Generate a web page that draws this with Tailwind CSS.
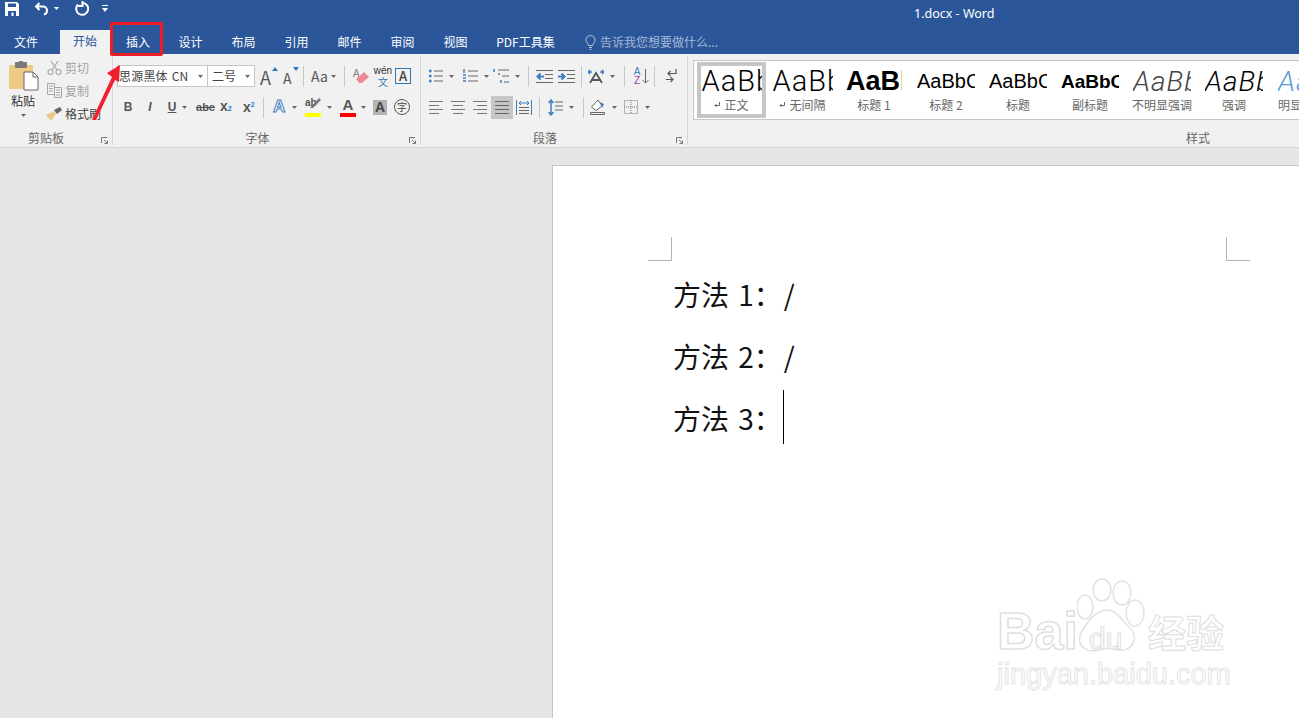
<!DOCTYPE html>
<html lang="zh-CN">
<head>
<meta charset="UTF-8">
<title>1.docx - Word</title>
<script src="https://cdn.jsdelivr.net/npm/@tailwindcss/browser@4"></script>
</head>
<body class="relative w-[1299px] h-[718px] overflow-hidden bg-[#e6e6e6] [font-family:'Noto_Sans_CJK_SC','Liberation_Sans',sans-serif]">

<!-- title bar -->
<div class="h-[30px] bg-[#2b579a] relative flex items-start">
  <div class="flex items-center h-[16px] pl-[5px] pt-[1px]">
    <svg class="w-[14px] h-[14px]" viewBox="0 0 14 14"><path d="M0 0h12l2 2v12H0z" fill="#fff"/><path d="M3 1.500h8v3.500H3zM3 9h8v5H8.500v-3.500h-2V14H3z" fill="#2b579a"/></svg>
    <svg class="w-[15px] h-[14px] ml-[15px]" viewBox="0 0 15 14" fill="none" stroke="#fff" stroke-width="2"><path d="M5.500 1 2 4.500 5.500 8M2 4.500h7a4 4 0 0 1 4 4 4 4 0 0 1-3 4"/></svg>
    <svg class="w-[5px] h-[3px] ml-[5px]" viewBox="0 0 5 3" fill="#fff"><path d="M0 0h5L2.500 3z"/></svg>
    <svg class="w-[15px] h-[15px] ml-[15px]" viewBox="0 0 15 15" fill="none" stroke="#fff" stroke-width="2"><path d="M4 3.500a6 6 0 1 0 4-1.700M8.500 0v5H4"/></svg>
    <svg class="w-[6px] h-[7px] ml-[13px]" viewBox="0 0 6 7" fill="#fff"><path d="M0 0h6v1H0zM0 3h6L3 7z"/></svg>
  </div>
  <span class="absolute left-[914px] top-[5px] text-[12.500px] leading-[18px] text-white [font-family:'Noto_Sans','Open_Sans',sans-serif]">1.docx - Word</span>
</div>

<!-- tabs -->
<div class="h-[24px] bg-[#2b579a] flex items-center text-[12px] text-white">
  <span class="w-[52px] text-center">文件</span>
  <span class="ml-[8px] w-[50px] h-[24px] leading-[22px] bg-[#f1f1f1] text-[#2b579a] text-center">开始</span>
  <span class="w-[52px] ml-[2px] text-center">插入</span>
  <span class="w-[53px] text-center">设计</span>
  <span class="w-[53px] text-center">布局</span>
  <span class="w-[53px] text-center">引用</span>
  <span class="w-[53px] text-center">邮件</span>
  <span class="w-[53px] text-center">审阅</span>
  <span class="w-[53px] text-center">视图</span>
  <span class="w-[87px] text-center">PDF工具集</span>
  <svg class="w-[11px] h-[15px] ml-[16px]" viewBox="0 0 11 15" fill="none" stroke="#b4c6e0" stroke-width="1"><path d="M3.500 10.500C3 8 1 7.500 1 5a4.500 4.500 0 0 1 9 0c0 2.500-2 3-2.500 5.500zM4 12.500h3M4.500 14.500h2"/></svg>
  <span class="ml-[4px] text-[#a5b8d6]">告诉我您想要做什么...</span>
</div>

<!-- ribbon -->
<div class="h-[94px] bg-[#f1f1f1] border-b border-[#d4d4d4] flex">

  <!-- clipboard -->
  <div class="w-[113px] shrink-0 relative border-r border-[#d4d4d4] h-[89px] mt-[2px]">
    <div class="flex h-[72px]">
      <div class="w-[47px] flex flex-col items-center shrink-0">
        <svg class="w-[30px] h-[30px] mt-[5px] ml-[1px]" viewBox="0 0 30 30">
          <rect x="0" y="4" width="24" height="24" rx="1" fill="#eecb85"/>
          <rect x="6" y="1" width="12" height="6" rx="1" fill="#7a7a7a"/>
          <rect x="10" y="0" width="4" height="3" fill="#7a7a7a"/>
          <path d="M15 11h9l5 5v13H15z" fill="#fff" stroke="#666"/>
          <path d="M24 11v5h5" fill="none" stroke="#666"/>
        </svg>
        <span class="text-[12px] leading-[16px] mt-[2px] text-[#333] -ml-[1px]">粘贴</span>
        <svg class="w-[5px] h-[3px] mt-[5px]" viewBox="0 0 5 3" fill="#666"><path d="M0 0h5L2.500 3z"/></svg>
      </div>
      <div class="flex flex-col text-[12px]">
        <div class="flex items-center h-[23px] text-[#a3a3a3]">
          <svg class="w-[15px] h-[15px]" viewBox="0 0 15 15" fill="none" stroke="#a8a8a8" stroke-width="1.200"><circle cx="3.500" cy="12" r="2.500"/><circle cx="11.500" cy="12" r="2.500"/><path d="M5 10 11 1M10 10 4 1"/></svg>
          <span class="ml-[3px]">剪切</span>
        </div>
        <div class="flex items-center h-[23px] text-[#a3a3a3]">
          <svg class="w-[15px] h-[15px]" viewBox="0 0 15 15" fill="none" stroke="#a8a8a8"><path d="M.5.5h7v11h-7zM7.500 4.500h7v10h-7zM2 3h4M2 5.500h4M2 8h4M9 7h4M9 9.500h4M9 12h4"/></svg>
          <span class="ml-[3px]">复制</span>
        </div>
        <div class="flex items-center h-[23px] text-[#444]">
          <svg class="w-[16px] h-[14px] -ml-[1px]" viewBox="0 0 16 14"><path d="M8 4 0 8l5 6 5-7z" fill="#eac88a"/><path d="M8 3l3 4 5-4-2-3z" fill="#666"/></svg>
          <span class="ml-[3px]">格式刷</span>
        </div>
      </div>
    </div>
    <div class="text-center text-[12px] leading-[16px] text-[#666] pr-[20px] mt-[2px]">剪贴板</div>
    <svg class="absolute left-[101px] top-[81px] w-[7px] h-[7px]" viewBox="0 0 7 7" fill="none" stroke="#777"><path d="M.5 6V.5H6M3 3l3 3M3.500 6.500h3v-3"/></svg>
  </div>

  <!-- font -->
  <div class="w-[308px] shrink-0 relative border-r border-[#d4d4d4] h-[89px] mt-[2px] pl-[4px] pt-[9px]">
    <div class="flex items-center h-[22px] text-[#444]">
      <div class="w-[91px] h-[22px] bg-white border border-[#c6c6c6] flex items-center text-[12px] pl-[1px] whitespace-nowrap"><span class="flex-1 [word-spacing:1px] tracking-[0.2px]">思源黑体 CN</span><svg class="w-[5px] h-[3px] mr-[4px]" viewBox="0 0 5 3" fill="#666"><path d="M0 0h5L2.500 3z"/></svg></div>
      <div class="w-[47px] h-[22px] bg-white border border-l-0 border-[#c6c6c6] flex items-center text-[12px] pl-[4px]"><span class="flex-1">二号</span><svg class="w-[5px] h-[3px] mr-[4px]" viewBox="0 0 5 3" fill="#666"><path d="M0 0h5L2.500 3z"/></svg></div>
      <div class="ml-[5px] w-[17px] h-[18px] relative text-[18px] leading-[21px] text-[#555]">A<svg class="absolute -right-[1px] top-0 w-[6px] h-[4px]" viewBox="0 0 6 4" fill="#2e75b6"><path d="M0 4h6L3 0z"/></svg></div>
      <div class="ml-[6px] w-[16px] h-[18px] relative text-[14px] leading-[22px] text-[#555]">A<svg class="absolute right-0 top-0 w-[6px] h-[4px]" viewBox="0 0 6 4" fill="#2e75b6"><path d="M0 0h6L3 4z"/></svg></div>
      <div class="ml-[4px] w-px h-[21px] bg-[#c6c6c6]"></div>
      <div class="ml-[7px] text-[14px] leading-[20px] text-[#555] w-[15px]">Aa</div>
      <svg class="w-[5px] h-[3px] ml-[5px]" viewBox="0 0 5 3" fill="#666"><path d="M0 0h5L2.500 3z"/></svg>
      <div class="ml-[8px] w-px h-[21px] bg-[#c6c6c6]"></div>
      <div class="ml-[8px] w-[17px] h-[20px] relative text-[11px] leading-[13px] text-[#777]">A<svg class="absolute left-[2px] top-[5px] w-[15px] h-[13px]" viewBox="0 0 15 13"><path d="M1 8 9 1l5 5-7 6H4z" fill="#ee8a95"/></svg></div>
      <div class="ml-[5px] w-[16px] flex flex-col items-center text-[#333]"><span class="text-[10px] leading-[10px] [font-family:'Liberation_Sans',sans-serif]">wén</span><span class="text-[10px] leading-[11px] text-[#2e75b6]">文</span></div>
      <div class="ml-[4px] w-[16px] h-[16px] border border-[#2e75b6] text-[13px] leading-[14px] text-center font-medium text-[#444]">A</div>
    </div>
    <div class="flex items-center h-[22px] mt-[9px] text-[#555] [font-family:'Liberation_Sans',sans-serif]">
      <b class="ml-[6px] w-[10px] text-[12px] text-center">B</b>
      <i class="ml-[12px] w-[10px] text-[12px] text-center font-semibold">I</i>
      <u class="ml-[12px] w-[10px] text-[12px] text-center font-bold">U</u>
      <svg class="w-[5px] h-[3px] ml-[5px]" viewBox="0 0 5 3" fill="#666"><path d="M0 0h5L2.500 3z"/></svg>
      <s class="ml-[9px] text-[11px] w-[19px] text-center font-semibold">abc</s>
      <b class="ml-[5px] w-[14px] text-[14px] leading-[16px]">x<span class="text-[7px] text-[#2e75b6]">2</span></b>
      <b class="ml-[9px] w-[14px] text-[14px] leading-[16px] relative">x<span class="absolute top-[-2px] text-[7px] text-[#2e75b6]">2</span></b>
      <div class="ml-[6px] w-px h-[21px] bg-[#c6c6c6]"></div>
      <div class="ml-[9px] w-[14px] text-[17px] leading-[20px] font-bold text-white [-webkit-text-stroke:1px_#3f7fc1]">A</div>
      <svg class="w-[5px] h-[3px] ml-[5px]" viewBox="0 0 5 3" fill="#666"><path d="M0 0h5L2.500 3z"/></svg>
      <div class="ml-[8px] w-[16px] h-[20px] relative text-[10px] leading-[12px] font-bold"><span>ab</span><svg class="absolute left-[4px] top-0 w-[12px] h-[12px]" viewBox="0 0 12 12"><path d="M1 11 10 1l2 2-8 8z" fill="#777"/></svg><div class="absolute left-0 bottom-0 w-[16px] h-[4px] bg-[#ffff00]"></div></div>
      <svg class="w-[5px] h-[3px] ml-[6px]" viewBox="0 0 5 3" fill="#666"><path d="M0 0h5L2.500 3z"/></svg>
      <div class="ml-[8px] w-[16px] h-[20px] relative text-[15px] leading-[15px] text-center font-bold text-[#555]">A<div class="absolute left-0 bottom-0 w-[16px] h-[4px] bg-[#ff0000]"></div></div>
      <svg class="w-[5px] h-[3px] ml-[5px]" viewBox="0 0 5 3" fill="#666"><path d="M0 0h5L2.500 3z"/></svg>
      <div class="ml-[7px] w-[14px] h-[15px] bg-[#b4b4b4] text-[14px] leading-[15px] text-center font-bold text-[#444]">A</div>
      <div class="ml-[7px] w-[16px] h-[16px] rounded-full border border-[#555] text-[10px] leading-[14px] text-center text-[#444] [font-family:'Noto_Sans_CJK_SC',sans-serif]">字</div>
    </div>
    <div class="absolute left-0 right-[18px] top-[74px] text-center text-[12px] leading-[16px] text-[#666]">字体</div>
    <svg class="absolute right-[4px] top-[81px] w-[7px] h-[7px]" viewBox="0 0 7 7" fill="none" stroke="#777"><path d="M.5 6V.5H6M3 3l3 3M3.500 6.500h3v-3"/></svg>
  </div>

  <!-- paragraph -->
  <div class="w-[267px] shrink-0 relative border-r border-[#d4d4d4] h-[89px] mt-[2px] pl-[8px] pt-[9px]">
    <div class="flex items-center h-[22px]">
      <svg class="w-[14px] h-[14px]" viewBox="0 0 14 14" fill="none" stroke="#666"><path d="M5 2h9M5 7h9M5 12h9"/><path stroke="#3f7fc1" stroke-width="2.500" d="M0 2h2.500M0 7h2.500M0 12h2.500"/></svg>
      <svg class="w-[5px] h-[3px] ml-[6px]" viewBox="0 0 5 3" fill="#666"><path d="M0 0h5L2.500 3z"/></svg>
      <svg class="w-[15px] h-[14px] ml-[9px]" viewBox="0 0 15 14" fill="none" stroke="#666"><path d="M5 2h10M5 7h10M5 12h10"/><path stroke="#3f7fc1" stroke-width="1.500" d="M1 0v4M0 6h3M0 9h3M0 12h3"/></svg>
      <svg class="w-[5px] h-[3px] ml-[6px]" viewBox="0 0 5 3" fill="#666"><path d="M0 0h5L2.500 3z"/></svg>
      <svg class="w-[16px] h-[14px] ml-[4px]" viewBox="0 0 16 14" fill="none" stroke="#666"><path d="M5 1h11M9 7h7M11 13h5"/><path stroke="#3f7fc1" stroke-width="1.500" d="M1 0v3M5 5h2M8 11v3"/></svg>
      <svg class="w-[5px] h-[3px] ml-[6px]" viewBox="0 0 5 3" fill="#666"><path d="M0 0h5L2.500 3z"/></svg>
      <div class="ml-[8px] w-px h-[21px] bg-[#c6c6c6]"></div>
      <svg class="w-[17px] h-[13px] ml-[7px]" viewBox="0 0 17 13" fill="none" stroke="#666"><path d="M0 .5h17M9 4.500h8M9 8.500h8M0 12.500h17"/><path stroke="#3f7fc1" stroke-width="2" d="M8 6.500H2M4.500 3.500l-3 3 3 3"/></svg>
      <svg class="w-[17px] h-[13px] ml-[5px]" viewBox="0 0 17 13" fill="none" stroke="#666"><path d="M0 .5h17M9 4.500h8M9 8.500h8M0 12.500h17"/><path stroke="#3f7fc1" stroke-width="2" d="M0 6.500h6M3.500 3.500l3 3-3 3"/></svg>
      <div class="ml-[6px] w-px h-[21px] bg-[#c6c6c6]"></div>
      <svg class="w-[16px] h-[15px] ml-[6px]" viewBox="0 0 16 15" fill="none"><path d="M2 14 8 4l6 10M4 11h8" stroke="#555" stroke-width="1.800"/><path stroke="#3f7fc1" stroke-width="1.500" d="M0 3h4M2 1 0 3l2 2M12 3h4M14 1l2 2-2 2"/></svg>
      <svg class="w-[5px] h-[3px] ml-[6px]" viewBox="0 0 5 3" fill="#666"><path d="M0 0h5L2.500 3z"/></svg>
      <div class="ml-[9px] w-px h-[21px] bg-[#c6c6c6]"></div>
      <div class="ml-[7px] w-[10px] flex flex-col items-center text-[10px] leading-[9px] font-medium [font-family:'Liberation_Sans',sans-serif]"><span class="text-[#3f7fc1]">A</span><span class="text-[#8e44ad]">Z</span></div>
      <svg class="w-[7px] h-[15px]" viewBox="0 0 7 15" fill="none" stroke="#666"><path d="M3.500 0v14M.5 11l3 3 3-3"/></svg>
      <div class="ml-[5px] w-px h-[21px] bg-[#c6c6c6]"></div>
      <svg class="w-[12px] h-[14px] ml-[10px]" viewBox="0 0 12 14" fill="none" stroke="#555" stroke-width="1.200"><path d="M11 0v4.500H3M5.500 2 3 4.500 5.500 7M1 10.500h7M5.500 8 8 10.500 5.500 13"/></svg>
    </div>
    <div class="flex items-center h-[22px] mt-[9px]">
      <svg class="w-[14px] h-[13px]" viewBox="0 0 14 13" fill="none" stroke="#777"><path d="M0 .5h14M0 4.500h10M0 8.500h14M0 12.500h10"/></svg>
      <svg class="w-[14px] h-[13px] ml-[8px]" viewBox="0 0 14 13" fill="none" stroke="#777"><path d="M0 .5h14M2 4.500h10M0 8.500h14M2 12.500h10"/></svg>
      <svg class="w-[14px] h-[13px] ml-[8px]" viewBox="0 0 14 13" fill="none" stroke="#777"><path d="M0 .5h14M4 4.500h10M0 8.500h14M4 12.500h10"/></svg>
      <div class="ml-[4px] w-[22px] h-[23px] bg-[#c6c6c6] flex items-center justify-center"><svg class="w-[14px] h-[13px]" viewBox="0 0 14 13" fill="none" stroke="#666"><path d="M0 .5h14M0 4.500h14M0 8.500h14M0 12.500h14"/></svg></div>
      <svg class="w-[16px] h-[16px] ml-[3px]" viewBox="0 0 16 16" fill="none" stroke="#666"><path d="M3 8.500h10M3 11.500h10M3 14.500h10"/><path stroke="#3f7fc1" d="M.5 1v15M15.500 1v15M3 4h10M5 2 3 4l2 2M11 2l2 2-2 2"/></svg>
      <div class="ml-[7px] w-px h-[21px] bg-[#c6c6c6]"></div>
      <svg class="w-[15px] h-[17px] ml-[8px]" viewBox="0 0 15 17" fill="none" stroke="#666"><path d="M7 3h8M7 7h8M7 11h8"/><path stroke="#3f7fc1" stroke-width="1.500" d="M3 1v15M.5 4 3 1l2.500 3M.5 13 3 16l2.500-3"/></svg>
      <svg class="w-[5px] h-[3px] ml-[6px]" viewBox="0 0 5 3" fill="#666"><path d="M0 0h5L2.500 3z"/></svg>
      <div class="ml-[9px] w-px h-[21px] bg-[#c6c6c6]"></div>
      <svg class="w-[16px] h-[16px] ml-[6px]" viewBox="0 0 16 16" fill="none" stroke="#666"><path d="M8 1 1.500 8 6 11.500 12 7z" fill="#fff"/><path d="M10 3l4 2-2 4z" fill="#3f7fc1" stroke="none"/><path d="M.5 13.500h14v2H.5z"/></svg>
      <svg class="w-[5px] h-[3px] ml-[6px]" viewBox="0 0 5 3" fill="#666"><path d="M0 0h5L2.500 3z"/></svg>
      <svg class="w-[14px] h-[14px] ml-[7px]" viewBox="0 0 14 14" fill="none" stroke="#777" stroke-dasharray="1 1"><path d="M.5.5h13v13H.5zM7 0v14M0 7h14"/></svg>
      <svg class="w-[5px] h-[3px] ml-[7px]" viewBox="0 0 5 3" fill="#666"><path d="M0 0h5L2.500 3z"/></svg>
    </div>
    <div class="absolute left-0 right-[18px] top-[74px] text-center text-[12px] leading-[16px] text-[#666]">段落</div>
    <svg class="absolute right-[4px] top-[81px] w-[7px] h-[7px]" viewBox="0 0 7 7" fill="none" stroke="#777"><path d="M.5 6V.5H6M3 3l3 3M3.500 6.500h3v-3"/></svg>
  </div>

  <!-- styles -->
  <div class="flex-1 min-w-0 relative pl-[5px] pt-[6px]">
    <div class="h-[60px] bg-white border border-r-0 border-[#c6c6c6] flex pl-[3px] pt-[1px] overflow-hidden text-[12px] text-[#666]">
      <div class="w-[69px] h-[56px] shrink-0 border-[4px] border-[#c6c6c6] flex flex-col items-center">
        <div class="w-[60px] overflow-hidden whitespace-nowrap text-[29px] leading-[31px] font-light tracking-[1px] text-black [font-family:'Roboto',sans-serif]">AaBbCcDdEe</div>
        <div class="leading-[16px] flex items-center"><svg class="w-[6px] h-[6px] mr-[4px]" viewBox="0 0 6 6" fill="none" stroke="#666"><path d="M5.500 0v3.500H1M2.500 2 1 3.500 2.500 5"/></svg>正文</div>
      </div>
      <div class="w-[72px] h-[56px] shrink-0 flex flex-col items-center pt-[4px] pl-[1px]">
        <div class="w-[60px] overflow-hidden whitespace-nowrap text-[29px] leading-[31px] font-light tracking-[1px] text-black [font-family:'Roboto',sans-serif]">AaBbCcDdEe</div>
        <div class="leading-[16px] flex items-center"><svg class="w-[6px] h-[6px] mr-[4px]" viewBox="0 0 6 6" fill="none" stroke="#666"><path d="M5.500 0v3.500H1M2.500 2 1 3.500 2.500 5"/></svg>无间隔</div>
      </div>
      <div class="w-[72px] h-[56px] shrink-0 flex flex-col items-center pt-[4px]">
        <div class="w-[56px] overflow-hidden whitespace-nowrap text-[27px] leading-[31px] font-bold text-black [font-family:'Liberation_Sans',sans-serif]">AaBbCc</div>
        <div class="leading-[16px]">标题 1</div>
      </div>
      <div class="w-[72px] h-[56px] shrink-0 flex flex-col items-center pt-[4px]">
        <div class="w-[58px] overflow-hidden whitespace-nowrap text-[20px] leading-[31px] text-black [font-family:'Liberation_Sans',sans-serif]">AaBbCcDd</div>
        <div class="leading-[16px]">标题 2</div>
      </div>
      <div class="w-[72px] h-[56px] shrink-0 flex flex-col items-center pt-[4px]">
        <div class="w-[58px] overflow-hidden whitespace-nowrap text-[20px] leading-[31px] text-black [font-family:'Liberation_Sans',sans-serif]">AaBbCcDd</div>
        <div class="leading-[16px]">标题</div>
      </div>
      <div class="w-[72px] h-[56px] shrink-0 flex flex-col items-center pt-[4px]">
        <div class="w-[58px] overflow-hidden whitespace-nowrap text-[19px] leading-[31px] font-bold text-black [font-family:'Liberation_Sans',sans-serif]">AaBbCcDd</div>
        <div class="leading-[16px]">副标题</div>
      </div>
      <div class="w-[72px] h-[56px] shrink-0 flex flex-col items-center pt-[4px]">
        <div class="w-[58px] overflow-hidden whitespace-nowrap text-[28px] leading-[31px] italic font-light text-[#444] tracking-[1px] [font-family:'Roboto',sans-serif]">AaBbCc</div>
        <div class="leading-[16px]">不明显强调</div>
      </div>
      <div class="w-[72px] h-[56px] shrink-0 flex flex-col items-center pt-[4px]">
        <div class="w-[58px] overflow-hidden whitespace-nowrap text-[28px] leading-[31px] italic font-light text-black tracking-[1px] [font-family:'Roboto',sans-serif]">AaBbCc</div>
        <div class="leading-[16px]">强调</div>
      </div>
      <div class="w-[72px] h-[56px] shrink-0 flex flex-col pt-[4px] pl-[8px]">
        <div class="w-[58px] overflow-hidden whitespace-nowrap text-[28px] leading-[31px] italic font-light text-[#5b9bd5] tracking-[1px] [font-family:'Roboto',sans-serif]">AaBbCc</div>
        <div class="leading-[16px] whitespace-nowrap">明显强调</div>
      </div>
    </div>
    <div class="absolute left-[498px] top-[76px] w-[24px] text-[12px] leading-[16px] text-[#666] whitespace-nowrap">样式</div>
  </div>
</div>

<!-- document -->
<div class="pl-[552px] pt-[17px] h-[570px]">
  <div class="relative h-[553px] bg-white border-l border-t border-[#c6c6c6] pl-[120px] pt-[97px] text-[28px] text-[#111] leading-[62px] [word-spacing:3px]">
    <div class="absolute left-[95px] top-[71px] w-[24px] h-[24px] border-r border-b border-[#b4b4b4]"></div>
    <div class="absolute left-[673px] top-[71px] w-[24px] h-[24px] border-l border-b border-[#b4b4b4]"></div>
    <div class="whitespace-pre">方法 1：<span class="ml-[2px]">/</span></div>
    <div class="whitespace-pre">方法 2：<span class="ml-[2px]">/</span></div>
    <div class="flex whitespace-pre">方法 3：<span class="inline-block w-px h-[54px] mt-[3px] bg-black ml-[1px]"></span></div>
  </div>
</div>

<!-- annotation: red box and arrow -->
<div class="absolute left-[110px] top-[22px] w-[53px] h-[34px] border-[3px] border-[#ec1c24] rounded-[2px]"></div>
<svg class="absolute left-0 top-0 w-[200px] h-[130px]" viewBox="0 0 200 130"><path d="M120 65 107 73l5 4-20 43h4l19-40 4 2z" fill="#f0202f"/></svg>

<!-- watermark -->
<div class="absolute left-[997px] top-[578px] w-[240px] h-[120px]">
  <svg class="absolute left-[80px] top-0 w-[70px] h-[76px]" viewBox="0 0 70 76" fill="#fff" stroke="#e2e2e2" stroke-width="1.500">
    <ellipse cx="8" cy="29" rx="8" ry="12"/><ellipse cx="25" cy="12" rx="9" ry="11"/><ellipse cx="45" cy="15" rx="9" ry="12"/><ellipse cx="58" cy="35" rx="9" ry="13"/>
    <path d="M30 32c8 0 13 7 19 14 6 5 10 10 8 17-2 7-9 10-15 9-6-1-11-3-16-1-6 2-14 3-19-1-6-4-5-12-2-17 5-8 13-21 25-21z"/>
  </svg>
  <span class="absolute left-0 top-[25px] text-[52px] leading-[56px] font-bold text-white [-webkit-text-stroke:1.500px_#dedede] [font-family:'Liberation_Sans',sans-serif]">Bai</span>
  <span class="absolute left-[92px] top-[46px] text-[30px] leading-[30px] text-white [-webkit-text-stroke:1px_#dedede] [font-family:'Liberation_Sans',sans-serif]">du</span>
  <span class="absolute left-[151px] top-[29px] text-[38px] leading-[48px] font-bold text-white [-webkit-text-stroke:1px_#dedede]">经验</span>
  <span class="absolute left-0 top-[78px] text-[29px] leading-[36px] text-white [-webkit-text-stroke:1px_#e4e4e4] whitespace-nowrap [font-family:'Liberation_Sans',sans-serif]">jingyan.baidu.com</span>
</div>
</body>
</html>
